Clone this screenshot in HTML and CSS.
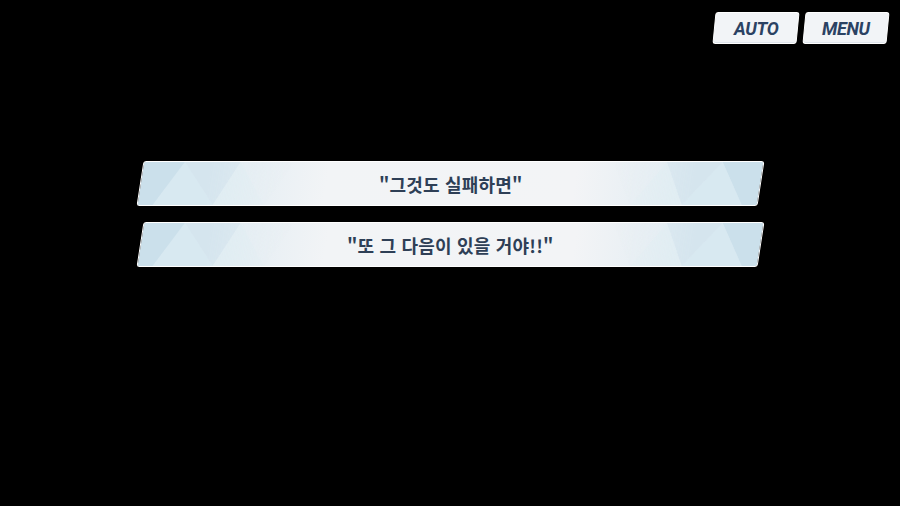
FILE: index.html
```html
<!DOCTYPE html>
<html lang="ko">
<head>
<meta charset="utf-8">
<title>선택지</title>
<link rel="stylesheet" href="styles.css">
</head>
<body>
  <div class="screen">
    <header class="topbar">
      <button class="hud-btn"><span>AUTO</span></button>
      <button class="hud-btn"><span>MENU</span></button>
    </header>

    <main class="choices">
      <div class="choice">
        <svg class="deco deco-left" viewBox="0 0 140 44" preserveAspectRatio="none">
          <polygon points="0,0 38,0 14,44 0,44" fill="#cbe0eb"/>
          <polygon points="38,0 70,44 14,44" fill="#d8e9f1"/>
          <polygon points="38,0 90,0 70,44" fill="#d3e4ed" opacity=".85"/>
          <polygon points="90,0 118,44 70,44" fill="#e0edf3" opacity=".8"/>
          <polygon points="90,0 140,0 118,44" fill="#e6eff4" opacity=".6"/>
        </svg>
        <svg class="deco deco-right" viewBox="0 0 140 44" preserveAspectRatio="none">
          <polygon points="140,0 102,0 126,44 140,44" fill="#cbe0eb"/>
          <polygon points="102,0 70,44 126,44" fill="#d8e9f1"/>
          <polygon points="102,0 50,0 70,44" fill="#d3e4ed" opacity=".85"/>
          <polygon points="50,0 22,44 70,44" fill="#e0edf3" opacity=".8"/>
          <polygon points="50,0 0,0 22,44" fill="#e6eff4" opacity=".6"/>
        </svg>
        <span class="label">"그것도 실패하면"</span>
      </div>
      <div class="choice">
        <svg class="deco deco-left" viewBox="0 0 140 44" preserveAspectRatio="none">
          <polygon points="0,0 38,0 14,44 0,44" fill="#cbe0eb"/>
          <polygon points="38,0 70,44 14,44" fill="#d8e9f1"/>
          <polygon points="38,0 90,0 70,44" fill="#d3e4ed" opacity=".85"/>
          <polygon points="90,0 118,44 70,44" fill="#e0edf3" opacity=".8"/>
          <polygon points="90,0 140,0 118,44" fill="#e6eff4" opacity=".6"/>
        </svg>
        <svg class="deco deco-right" viewBox="0 0 140 44" preserveAspectRatio="none">
          <polygon points="140,0 102,0 126,44 140,44" fill="#cbe0eb"/>
          <polygon points="102,0 70,44 126,44" fill="#d8e9f1"/>
          <polygon points="102,0 50,0 70,44" fill="#d3e4ed" opacity=".85"/>
          <polygon points="50,0 22,44 70,44" fill="#e0edf3" opacity=".8"/>
          <polygon points="50,0 0,0 22,44" fill="#e6eff4" opacity=".6"/>
        </svg>
        <span class="label">"또 그 다음이 있을 거야!!"</span>
      </div>
    </main>
  </div>
</body>
</html>
```
FILE: styles.css
```css
* {
  box-sizing: border-box;
}

html,
body {
  margin: 0;
  padding: 0;
  background: #000;
}

.screen {
  width: 900px;
  height: 506px;
  overflow: hidden;
  background: #000;
  display: flex;
  flex-direction: column;
}

/* top-right HUD buttons */
.topbar {
  display: flex;
  justify-content: flex-end;
  gap: 6px;
  padding: 12px 12px 0 0;
}

.hud-btn {
  width: 84px;
  height: 32px;
  padding: 0;
  border: 1px solid #ffffff;
  border-radius: 3px;
  background: #f2f4f7;
  transform: skewX(-5.5deg);
  display: flex;
  align-items: center;
  justify-content: center;
  cursor: pointer;
  box-shadow: inset 0 -1px 0 #dfe5ec;
}

.hud-btn span {
  transform: skewX(5.5deg);
  font-family: Roboto, "Liberation Sans", sans-serif;
  font-weight: 700;
  font-style: italic;
  font-size: 18px;
  letter-spacing: -0.3px;
  color: #2b4263;
}

/* dialogue choices */
.choices {
  display: flex;
  flex-direction: column;
  align-items: center;
  gap: 16px;
  margin-top: 117px;
}

.choice {
  position: relative;
  width: 621px;
  height: 45px;
  border: 1.5px solid #ffffff;
  border-radius: 3px;
  background: linear-gradient(90deg,
      #d3e5ee 0%,
      #e3edf3 14%,
      #f2f4f6 30%,
      #f3f4f6 70%,
      #e3edf3 86%,
      #d3e5ee 100%);
  transform: skewX(-8.8deg);
  display: flex;
  align-items: center;
  justify-content: center;
  overflow: hidden;
}

.deco {
  position: absolute;
  top: 0;
  height: 100%;
  width: 150px;
}

.deco-left {
  left: 0;
  -webkit-mask-image: linear-gradient(90deg, #000 45%, transparent 100%);
  mask-image: linear-gradient(90deg, #000 45%, transparent 100%);
}

.deco-right {
  right: 0;
  -webkit-mask-image: linear-gradient(270deg, #000 45%, transparent 100%);
  mask-image: linear-gradient(270deg, #000 45%, transparent 100%);
}

.label {
  position: relative;
  transform: skewX(8.8deg);
  font-family: "Noto Sans CJK KR", "Noto Sans", sans-serif;
  font-weight: 700;
  font-size: 18px;
  color: #2e3f56;
  letter-spacing: 0.2px;
}
```
